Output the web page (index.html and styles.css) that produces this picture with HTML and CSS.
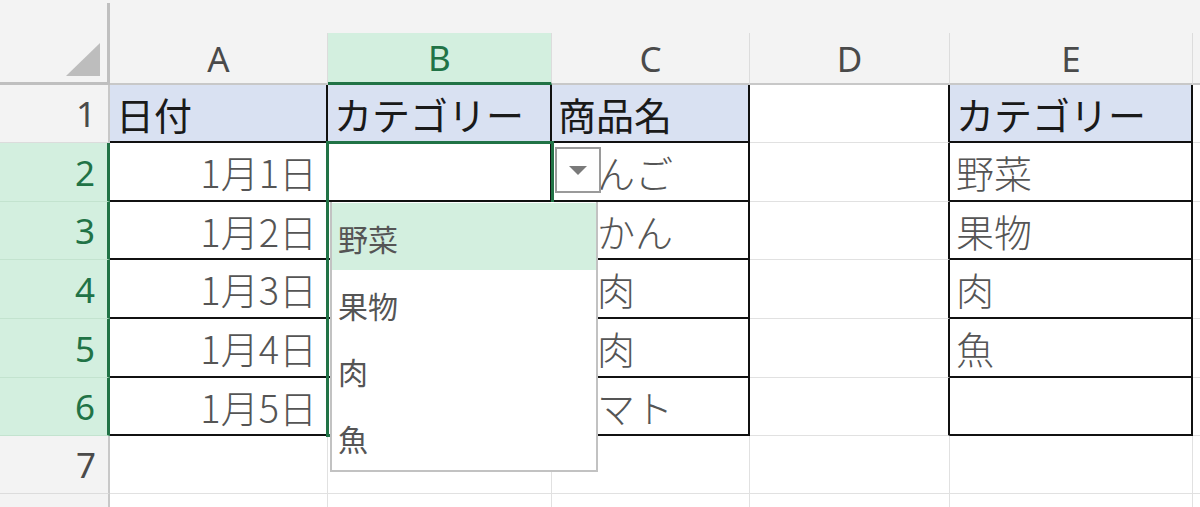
FILE: index.html
```html
<!DOCTYPE html>
<html lang="ja">
<head>
<meta charset="utf-8">
<title>Excel dropdown</title>
<link rel="stylesheet" href="styles.css">
</head>
<body>
<div class="sheet">
  <div class="grid">
    <div class="corner"><svg class="corner-tri" width="34" height="33" viewBox="0 0 34 33"><polygon points="34,0 34,33 0,33" fill="#bdbdbd"/></svg></div>
    <div class="strip"></div>

    <div class="ch">A</div>
    <div class="ch sel">B</div>
    <div class="ch">C</div>
    <div class="ch">D</div>
    <div class="ch">E</div>
    <div class="ch"></div>

    <div class="rh">1</div>
    <div class="cell t hd">日付</div>
    <div class="cell t hd">カテゴリー</div>
    <div class="cell t hd">商品名</div>
    <div class="cell tl"></div>
    <div class="cell t hd">カテゴリー</div>
    <div class="cell"></div>

    <div class="rh sel">2</div>
    <div class="cell t num">1月1日</div>
    <div class="cell t"></div>
    <div class="cell t pc">りんご</div>
    <div class="cell tl"></div>
    <div class="cell t">野菜</div>
    <div class="cell"></div>

    <div class="rh sel">3</div>
    <div class="cell t num">1月2日</div>
    <div class="cell t"></div>
    <div class="cell t pc">みかん</div>
    <div class="cell tl"></div>
    <div class="cell t">果物</div>
    <div class="cell"></div>

    <div class="rh sel">4</div>
    <div class="cell t num">1月3日</div>
    <div class="cell t"></div>
    <div class="cell t pc">牛肉</div>
    <div class="cell tl"></div>
    <div class="cell t">肉</div>
    <div class="cell"></div>

    <div class="rh sel">5</div>
    <div class="cell t num">1月4日</div>
    <div class="cell t"></div>
    <div class="cell t pc">豚肉</div>
    <div class="cell tl"></div>
    <div class="cell t">魚</div>
    <div class="cell"></div>

    <div class="rh sel">6</div>
    <div class="cell t num">1月5日</div>
    <div class="cell t"></div>
    <div class="cell t pc">トマト</div>
    <div class="cell tl"></div>
    <div class="cell t"></div>
    <div class="cell"></div>

    <div class="rh">7</div>
    <div class="cell"></div>
    <div class="cell"></div>
    <div class="cell"></div>
    <div class="cell"></div>
    <div class="cell"></div>
    <div class="cell"></div>

    <div class="rh"></div>
    <div class="cell"></div>
    <div class="cell"></div>
    <div class="cell"></div>
    <div class="cell"></div>
    <div class="cell"></div>
    <div class="cell"></div>
  </div>

  <div class="selection"></div>

  <div class="dd-button"><svg width="18" height="9" viewBox="0 0 18 9"><polygon points="0,0 18,0 9,9" fill="#7a7a7a"/></svg></div>

  <ul class="dd-list">
    <li class="dd-item active">野菜</li>
    <li class="dd-item">果物</li>
    <li class="dd-item">肉</li>
    <li class="dd-item">魚</li>
  </ul>
</div>
</body>
</html>
```

FILE: styles.css
```css
html, body {
  margin: 0;
  padding: 0;
  background: #ffffff;
}

body {
  width: 1200px;
  height: 507px;
  overflow: hidden;
}

.sheet {
  position: relative;
  width: 1200px;
  height: 507px;
  overflow: hidden;
  font-family: "Noto Sans CJK JP", "Noto Sans", sans-serif;
}

.grid {
  display: grid;
  grid-template-columns: 110px 218px 224px 198px 200px 243px 1fr;
  grid-template-rows: 33px 52px 58px 59px 58px 59px 59px 58px 58px 58px;
}

.corner {
  grid-row: 1 / 3;
  grid-column: 1;
  background: #f3f3f3;
  box-sizing: border-box;
  border-bottom: 3px solid #bfbfbf;
  display: flex;
  justify-content: flex-end;
}

.corner-tri {
  display: block;
  margin: 43px 7px 0 0;
}

.corner::after {
  content: "";
  width: 3px;
  margin-top: 3px;
  background: #bfbfbf;
}

.strip {
  grid-row: 1;
  grid-column: 2 / -1;
  background: #f3f3f3;
}

.ch {
  background: #f3f3f3;
  box-sizing: border-box;
  border-right: 1px solid #dcdcdc;
  border-bottom: 2px solid #c8c8c8;
  display: flex;
  align-items: center;
  justify-content: center;
  font-family: "Noto Sans", "Open Sans", sans-serif;
  font-size: 35px;
  color: #4a4a4a;
}

.ch.sel {
  background: #d3efdf;
  color: #217346;
  border-bottom: 3px solid #217346;
}

.rh {
  background: #f3f3f3;
  box-sizing: border-box;
  border-right: 2px solid #c8c8c8;
  border-bottom: 1px solid #dcdcdc;
  display: flex;
  align-items: center;
  justify-content: flex-end;
  padding-right: 12px;
  font-family: "Noto Sans", "Open Sans", sans-serif;
  font-size: 35px;
  color: #4a4a4a;
}

.rh.sel {
  background: #d3efdf;
  color: #217346;
  border-right: 3px solid #217346;
  border-bottom: 1px solid #c3e3cf;
}

.cell {
  box-sizing: border-box;
  border-right: 1px solid #e1e1e1;
  border-bottom: 1px solid #e1e1e1;
  display: flex;
  align-items: center;
  padding: 0 6px;
  font-size: 38px;
  font-weight: 300;
  color: #555555;
  white-space: nowrap;
  overflow: hidden;
}

.cell.t {
  border-right: 2px solid #111111;
  border-bottom: 2px solid #111111;
}

.cell.tl {
  border-right: 2px solid #111111;
}

.cell.hd {
  background: #d9e1f2;
  color: #1a1a1a;
  font-weight: 400;
}

.cell.num {
  justify-content: flex-end;
  padding-right: 9px;
}

.cell.pc {
  padding-left: 7px;
}

.selection {
  position: absolute;
  left: 326px;
  top: 141px;
  width: 228px;
  height: 296px;
  box-sizing: border-box;
  border: 3px solid #217346;
  pointer-events: none;
}

.dd-button {
  position: absolute;
  left: 555px;
  top: 147px;
  width: 46px;
  height: 46px;
  box-sizing: border-box;
  border: 2px solid #9a9a9a;
  background: #ffffff;
  display: flex;
  align-items: center;
  justify-content: center;
}

.dd-button svg {
  display: block;
}

.dd-list {
  position: absolute;
  left: 330px;
  top: 202px;
  width: 268px;
  height: 270px;
  margin: 0;
  padding: 1px 0 0 0;
  box-sizing: border-box;
  list-style: none;
  background: #ffffff;
  border: 2px solid #c2c2c2;
  border-top: none;
  display: flex;
  flex-direction: column;
}

.dd-item {
  height: 67px;
  display: flex;
  align-items: center;
  padding: 3px 0 0 6px;
  box-sizing: border-box;
  font-size: 30px;
  color: #555555;
}

.dd-item.active {
  background: #d3efdf;
}
```
